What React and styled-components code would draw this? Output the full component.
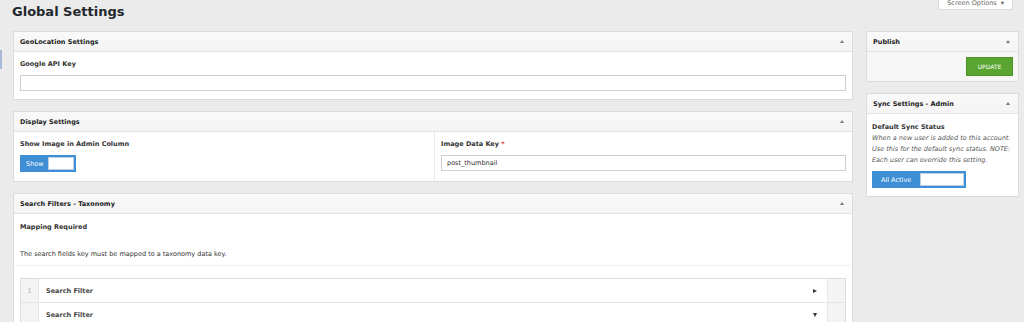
import React from 'react'
import styled, { createGlobalStyle } from 'styled-components'

const GlobalStyle = createGlobalStyle`
  html, body {
    margin: 0;
    padding: 0;
    background: #ebebeb;
    font-family: 'DejaVu Sans', Verdana, sans-serif;
    color: #333;
  }
  * { box-sizing: border-box; }
`

const Page = styled.div`
  position: relative;
  padding: 0 5px 0 13px;
  height: 322px;
  overflow: hidden;
`

const MenuEdge = styled.div`
  position: absolute;
  left: 0;
  top: 50px;
  width: 2px;
  height: 19px;
  background: #a9b8d6;
`

const TopBar = styled.div`
  display: flex;
  justify-content: space-between;
  align-items: flex-start;
  height: 31px;
`

const Title = styled.h1`
  margin: 3px 0 0 -1px;
  font-size: 13px;
  line-height: 18px;
  font-weight: bold;
  color: #23282d;
`

const ScreenOptions = styled.div`
  margin: -6px 6px 0 0;
  height: 16px;
  padding: 0 8px 1px;
  background: #fff;
  border: 1px solid #ddd;
  border-top: none;
  border-radius: 0 0 3px 3px;
  font-size: 6.5px;
  line-height: 9px;
  color: #666;
  display: flex;
  align-items: flex-end;
  gap: 4px;
`

const Columns = styled.div`
  display: grid;
  grid-template-columns: 840px 153px;
  gap: 13px;
  align-items: start;
`

const Stack = styled.div`
  display: flex;
  flex-direction: column;
  gap: 11px;
`

const Box = styled.section`
  background: ${p => (p.$tint ? '#f6f6f6' : '#fff')};
  border: 1px solid #dcdcdc;
`

const BoxHeader = styled.div`
  height: 20px;
  padding: 0 8px 0 6px;
  display: flex;
  align-items: center;
  justify-content: space-between;
  background: linear-gradient(#f9f9f9, #f4f4f4);
  border-bottom: 1px solid #e3e3e3;
  font-size: 6.5px;
  font-weight: bold;
  color: #222;
`

const Caret = styled.span`
  width: 0;
  height: 0;
  border-left: 2.5px solid transparent;
  border-right: 2.5px solid transparent;
  border-bottom: 3px solid #777;
`

const Body = styled.div`
  padding: ${p => p.$pad || '8px 6px 8px'};
  ${p => p.$line && 'border-bottom: 1px solid #f1f1f1;'}
`

const Split = styled.div`
  display: grid;
  grid-template-columns: 420px 1fr;
`

const Cell = styled.div`
  padding: 8px 6px 9px;
  & + & { border-left: 1px solid #e8e8e8; }
`

const Label = styled.div`
  font-size: 6.5px;
  line-height: 8px;
  font-weight: bold;
  color: #333;
  margin-bottom: ${p => p.$mb || '7px'};
`

const Req = styled.span`
  color: #d33;
`

const Input = styled.div`
  height: 16px;
  border: 1px solid #cfcfcf;
  background: #fff;
  font-size: 6.5px;
  line-height: 14px;
  padding: 0 5px;
  color: #333;
`

const Toggle = styled.div`
  width: ${p => p.$w}px;
  height: 17px;
  background: #3d8ed4;
  display: flex;
  align-items: center;
  justify-content: space-between;
  padding: 0 2px 0 ${p => p.$pl || 6}px;
  font-size: 6.5px;
  color: #fff;
`

const Knob = styled.div`
  width: ${p => p.$w}px;
  height: 13px;
  background: #fff;
  border: 1px solid #b8cfe6;
`

const Text = styled.p`
  margin: 0;
  font-size: 6.5px;
  line-height: 8px;
  color: #333;
`

const Help = styled.p`
  margin: 0 0 5px;
  font-size: 6.5px;
  line-height: 11px;
  font-style: italic;
  color: #555;
`

const Table = styled.div`
  border: 1px solid #dcdcdc;
  border-bottom: none;
`

const Row = styled.div`
  display: grid;
  grid-template-columns: 18px 1fr 18px;
  height: 24px;
  border-bottom: 1px solid #e6e6e6;
`

const Num = styled.div`
  background: #f4f4f4;
  border-right: 1px solid #e6e6e6;
  font-size: 6.5px;
  color: #aaa;
  display: flex;
  align-items: center;
  justify-content: center;
`

const RowMain = styled.div`
  display: flex;
  align-items: center;
  justify-content: space-between;
  padding: 0 10px 0 7px;
  font-size: 6.5px;
  font-weight: bold;
  color: #444;
`

const Handle = styled.div`
  background: #f4f4f4;
  border-left: 1px solid #e6e6e6;
`

const Arrow = styled.span`
  width: 0;
  height: 0;
  ${p =>
    p.$down
      ? 'border-left: 2.5px solid transparent; border-right: 2.5px solid transparent; border-top: 4px solid #333;'
      : 'border-top: 2.5px solid transparent; border-bottom: 2.5px solid transparent; border-left: 4px solid #333;'}
`

const Actions = styled.div`
  display: flex;
  justify-content: flex-end;
`

const UpdateButton = styled.button`
  width: 47px;
  height: 19px;
  border: 1px solid #4d9427;
  background: #5aa532;
  color: #fff;
  font-family: inherit;
  font-size: 6px;
  padding: 0;
  text-transform: uppercase;
`

export default function App() {
  return (
    <Page>
      <GlobalStyle />
      <MenuEdge />
      <TopBar>
        <Title>Global Settings</Title>
        <ScreenOptions>Screen Options <span>▾</span></ScreenOptions>
      </TopBar>
      <Columns>
        <Stack>
          <Box>
            <BoxHeader>GeoLocation Settings<Caret /></BoxHeader>
            <Body>
              <Label>Google API Key</Label>
              <Input />
            </Body>
          </Box>
          <Box>
            <BoxHeader>Display Settings<Caret /></BoxHeader>
            <Split>
              <Cell>
                <Label>Show Image in Admin Column</Label>
                <Toggle $w={56}>Show<Knob $w={26} /></Toggle>
              </Cell>
              <Cell>
                <Label>Image Data Key <Req>*</Req></Label>
                <Input>post_thumbnail</Input>
              </Cell>
            </Split>
          </Box>
          <Box>
            <BoxHeader>Search Filters - Taxonomy<Caret /></BoxHeader>
            <Body $line $pad="9px 6px 7px">
              <Label $mb="19px">Mapping Required</Label>
              <Text>The search fields key must be mapped to a taxonomy data key.</Text>
            </Body>
            <Body $pad="12px 6px 8px">
              <Table>
                <Row>
                  <Num>1</Num>
                  <RowMain>Search Filter<Arrow /></RowMain>
                  <Handle />
                </Row>
                <Row>
                  <Num />
                  <RowMain>Search Filter<Arrow $down /></RowMain>
                  <Handle />
                </Row>
              </Table>
            </Body>
          </Box>
        </Stack>
        <Stack>
          <Box $tint>
            <BoxHeader>Publish<Caret /></BoxHeader>
            <Body $pad="5px 5px 5px">
              <Actions>
                <UpdateButton>Update</UpdateButton>
              </Actions>
            </Body>
          </Box>
          <Box>
            <BoxHeader>Sync Settings - Admin<Caret /></BoxHeader>
            <Body $pad="9px 5px 8px">
              <Label $mb="2px">Default Sync Status</Label>
              <Help>
                When a new user is added to this account. Use this for the default sync status. NOTE:
                Each user can override this setting.
              </Help>
              <Toggle $w={94} $pl={9}>All Active<Knob $w={44} /></Toggle>
            </Body>
          </Box>
        </Stack>
      </Columns>
    </Page>
  )
}
